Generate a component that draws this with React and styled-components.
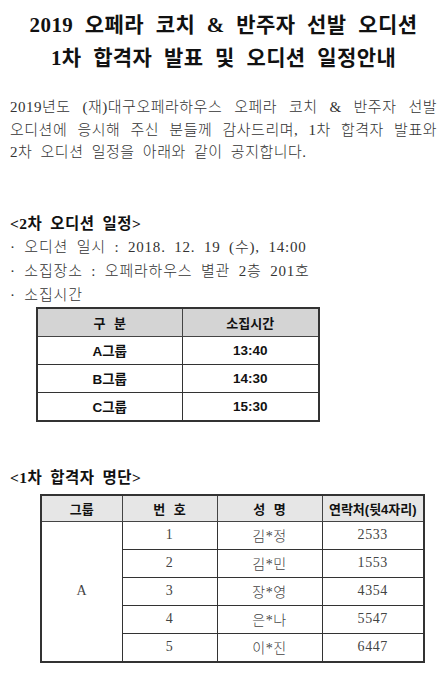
import React from 'react';
import styled, { createGlobalStyle } from 'styled-components';

const GlobalStyle = createGlobalStyle`
  body {
    margin: 0;
    background: #fff;
  }
`;

const serif = `"Liberation Serif", "Noto Sans CJK KR", serif`;
const gothic = `"Liberation Sans", "Noto Sans CJK KR", sans-serif`;

// Styles
const Page = styled.div`
  width: 447px;
  padding: 9px 10px 0 10px;
  box-sizing: border-box;
  color: #222;
  font-family: ${serif};
`;

const Title = styled.h1`
  margin: 0;
  text-align: center;
  font-size: 21px;
  font-weight: 700;
  line-height: 33px;
  color: #111;
  letter-spacing: 0.4px;
  word-spacing: 6px;
`;

const Intro = styled.div`
  margin-top: 21px;
  font-size: 15px;
  line-height: 22.5px;
  font-weight: 300;
  color: #333;
  letter-spacing: 0.5px;
  word-spacing: 4px;
`;

const Line = styled.div`
  text-align: ${({ $justify }) => ($justify ? 'justify' : 'left')};
  text-align-last: ${({ $justify }) => ($justify ? 'justify' : 'left')};
`;

const Section = styled.section`
  margin-top: ${({ $top }) => $top}px;
`;

const Heading = styled.h2`
  margin: 0;
  font-size: 15.5px;
  font-weight: 700;
  line-height: 22px;
  color: #111;
  letter-spacing: 0.4px;
  word-spacing: 4px;
`;

const Bullet = styled.div`
  font-size: 15px;
  font-weight: 300;
  line-height: 24px;
  color: #333;
  letter-spacing: 0.8px;
  word-spacing: 4px;
`;

const Table = styled.table`
  border-collapse: collapse;
  margin-left: ${({ $left }) => $left}px;
  margin-top: ${({ $top }) => $top || 0}px;
  width: ${({ $width }) => $width}px;
  border: 2px solid #333;
  table-layout: fixed;
`;

const HeadCell = styled.th`
  height: ${({ $h }) => $h}px;
  padding: 0;
  background: ${({ $bg }) => $bg};
  border: 1px solid #444;
  font-family: ${gothic};
  font-size: 13px;
  font-weight: 700;
  color: #111;
  text-align: center;
  word-spacing: 5px;
`;

const BoldCell = styled.td`
  height: 27px;
  padding: 0;
  border: 1px solid #333;
  border-left-color: #777;
  font-family: ${gothic};
  font-size: 13.5px;
  font-weight: 700;
  color: #111;
  text-align: center;
`;

const Cell = styled.td`
  height: 27px;
  padding: 0;
  border: 1px solid #333;
  font-family: ${serif};
  font-size: 14px;
  font-weight: 300;
  color: #444;
  text-align: center;
  letter-spacing: 0.6px;
`;

const schedule = [
  ['A그룹', '13:40'],
  ['B그룹', '14:30'],
  ['C그룹', '15:30'],
];

const passed = [
  ['1', '김*정', '2533'],
  ['2', '김*민', '1553'],
  ['3', '장*영', '4354'],
  ['4', '은*나', '5547'],
  ['5', '이*진', '6447'],
];

const App = () => {
  return (
    <>
      <GlobalStyle />
      <Page>
        <Title>
          2019 오페라 코치 &amp; 반주자 선발 오디션
          <br />
          1차 합격자 발표 및 오디션 일정안내
        </Title>

        <Intro>
          <Line $justify>2019년도 (재)대구오페라하우스 오페라 코치 &amp; 반주자 선발</Line>
          <Line $justify>오디션에 응시해 주신 분들께 감사드리며, 1차 합격자 발표와</Line>
          <Line>2차 오디션 일정을 아래와 같이 공지합니다.</Line>
        </Intro>

        <Section $top={49}>
          <Heading>&lt;2차 오디션 일정&gt;</Heading>
          <Bullet>· 오디션 일시 : 2018. 12. 19 (수), 14:00</Bullet>
          <Bullet>· 소집장소 : 오페라하우스 별관 2층 201호</Bullet>
          <Bullet>· 소집시간</Bullet>
          <Table $left={26} $width={284}>
            <colgroup>
              <col style={{ width: 145 }} />
              <col />
            </colgroup>
            <thead>
              <tr>
                <HeadCell $h={27} $bg="#d4d4d4">구 분</HeadCell>
                <HeadCell $h={27} $bg="#d4d4d4">소집시간</HeadCell>
              </tr>
            </thead>
            <tbody>
              {schedule.map(([group, time]) => (
                <tr key={group}>
                  <BoldCell>{group}</BoldCell>
                  <BoldCell>{time}</BoldCell>
                </tr>
              ))}
            </tbody>
          </Table>
        </Section>

        <Section $top={45}>
          <Heading>&lt;1차 합격자 명단&gt;</Heading>
          <Table $left={30} $width={385} $top={5}>
            <colgroup>
              <col style={{ width: 81 }} />
              <col style={{ width: 95 }} />
              <col style={{ width: 105 }} />
              <col />
            </colgroup>
            <thead>
              <tr>
                <HeadCell $h={25} $bg="#e6e6e6">그룹</HeadCell>
                <HeadCell $h={25} $bg="#e6e6e6">번 호</HeadCell>
                <HeadCell $h={25} $bg="#e6e6e6">성 명</HeadCell>
                <HeadCell $h={25} $bg="#e6e6e6">연락처(뒷4자리)</HeadCell>
              </tr>
            </thead>
            <tbody>
              {passed.map(([no, name, phone], i) => (
                <tr key={no}>
                  {i === 0 && <Cell rowSpan={5}>A</Cell>}
                  <Cell>{no}</Cell>
                  <Cell>{name}</Cell>
                  <Cell>{phone}</Cell>
                </tr>
              ))}
            </tbody>
          </Table>
        </Section>
      </Page>
    </>
  );
};

export default App;
